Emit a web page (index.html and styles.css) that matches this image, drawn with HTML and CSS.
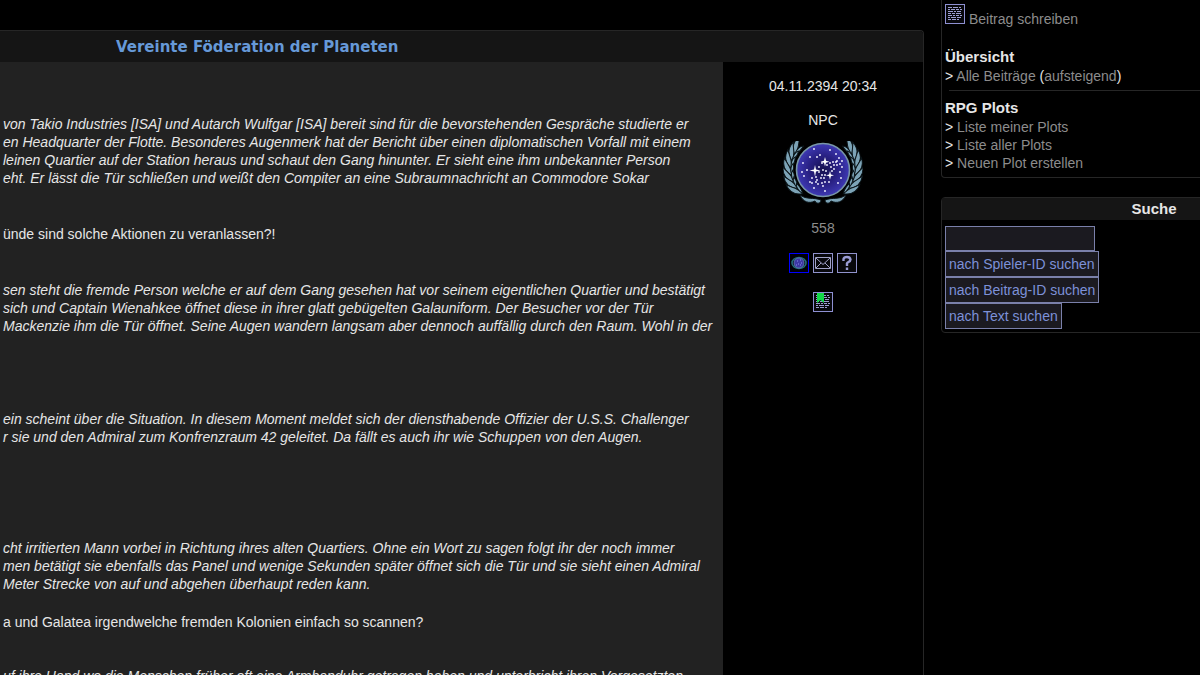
FILE: index.html
```html
<!DOCTYPE html>
<html lang="de">
<head>
<meta charset="utf-8">
<title>Vereinte Föderation der Planeten</title>
<link rel="stylesheet" href="styles.css">
</head>
<body>
<svg class="defs" aria-hidden="true">
  <symbol id="note" viewBox="0 0 20 20">
    <rect x="0.5" y="0.5" width="19" height="19" fill="#08080c" stroke="#8e90d2"/>
    <g stroke="#9c9ed0" fill="none">
      <path d="M3 3.5h14" stroke-dasharray="4 1 5 1 2 1"/>
      <path d="M3 5.5h14" stroke-dasharray="2 1 4 1 3 1"/>
      <path d="M3 7.5h14" stroke-dasharray="5 1 2 1 4 1"/>
      <path d="M3 9.5h14" stroke-dasharray="3 1 3 1 5 1"/>
      <path d="M3 11.5h14" stroke-dasharray="4 1 2 1 3 1"/>
      <path d="M3 13.5h14" stroke-dasharray="2 1 5 1 4 1"/>
      <path d="M3 15.5h11" stroke-dasharray="3 1 4 1 2 1"/>
    </g>
  </symbol>
</svg>
<div class="page">
  <main class="post">
    <header class="post-head"><h1 class="post-title"><a href="#">Vereinte Föderation der Planeten</a></h1></header>
    <div class="post-body">
      <article class="story">
        <p class="gap-m"><em>von Takio Industries [ISA] und Autarch Wulfgar [ISA] bereit sind für die bevorstehenden Gespräche studierte er<br>en Headquarter der Flotte. Besonderes Augenmerk hat der Bericht über einen diplomatischen Vorfall mit einem<br>leinen Quartier auf der Station heraus und schaut den Gang hinunter. Er sieht eine ihm unbekannter Person<br>eht. Er lässt die Tür schließen und weißt den Compiter an eine Subraumnachricht an Commodore Sokar</em></p>
        <p class="gap-m">ünde sind solche Aktionen zu veranlassen?!</p>
        <p class="gap-l"><em>sen steht die fremde Person welche er auf dem Gang gesehen hat vor seinem eigentlichen Quartier und bestätigt<br>sich und Captain Wienahkee öffnet diese in ihrer glatt gebügelten Galauniform. Der Besucher vor der Tür<br>Mackenzie ihm die Tür öffnet. Seine Augen wandern langsam aber dennoch auffällig durch den Raum. Wohl in der</em></p>
        <p class="gap-xl"><em>ein scheint über die Situation. In diesem Moment meldet sich der diensthabende Offizier der U.S.S. Challenger<br>r sie und den Admiral zum Konfrenzraum 42 geleitet. Da fällt es auch ihr wie Schuppen von den Augen.</em></p>
        <p class="gap-s"><em>cht irritierten Mann vorbei in Richtung ihres alten Quartiers. Ohne ein Wort zu sagen folgt ihr der noch immer<br>men betätigt sie ebenfalls das Panel und wenige Sekunden später öffnet sich die Tür und sie sieht einen Admiral<br>Meter Strecke von auf und abgehen überhaupt reden kann.</em></p>
        <p class="gap-n">a und Galatea irgendwelche fremden Kolonien einfach so scannen?</p>
        <p><em>uf ihre Hand wo die Menschen früher oft eine Armbanduhr getragen haben und unterbricht ihren Vorgesetzten</em></p>
      </article>
      <section class="meta">
        <time>04.11.2394 20:34</time>
        <span class="author">NPC</span>
        <svg class="emblem" viewBox="0 0 80 64" role="img" aria-label="Emblem">
          <defs>
            <radialGradient id="sky"><stop offset="0" stop-color="#15104e"/><stop offset="0.55" stop-color="#292184"/><stop offset="1" stop-color="#3e39b4"/></radialGradient>
            <g id="leaves">
              <path d="M9 36C3 33 -1 27 1 19C3 24 9 28 9 36Z"/>
              <path d="M9 36C7 30 8 26 10 24C11 28 11 32 9 36Z"/>
            </g>
            <g id="branch">
              <use href="#leaves" transform="rotate(42 40 28)"/>
              <use href="#leaves" transform="rotate(29 40 28)"/>
              <use href="#leaves" transform="rotate(16 40 28)"/>
              <use href="#leaves" transform="rotate(3 40 28)"/>
              <use href="#leaves" transform="rotate(-10 40 28)"/>
              <use href="#leaves" transform="rotate(-23 40 28)"/>
              <use href="#leaves" transform="rotate(-36 40 28)"/>
              <path d="M17 54C24 59 30 56 38 59C38 63 33 63 32 60C26 63 20 61 17 54Z"/>
            </g>
          </defs>
          <g fill="#7ca3b6" stroke="#0a1418" stroke-width="1">
            <use href="#branch"/>
            <use href="#branch" transform="translate(80 0) scale(-1 1)"/>
          </g>
          <circle cx="40" cy="29" r="26.5" fill="url(#sky)" stroke="#7896a8" stroke-width="1.6"/>
          <path fill="#fff" d="M32 24l1 4.400 4.500 1.100-4.500 1.100-1 5-1-5-4.500-1.100 4.500-1.100zM42 16l1 3.800 3.400 1-3.400 1-1 3.800-1-3.800-3.400-1 3.400-1zM47 30l.9 3.400 3.100.9-3.100.9-.9 3.600-.9-3.600-3.100-.9 3.100-.9z"/>
          <path fill="none" stroke="#f0f0ff" stroke-width="1.9" stroke-linecap="round" d="M31 8h0M47 9h0M27 16h0M34 16h0M53 13h0M37 14h0M20 22h0M19 31h0M21 35h0M24 29h0M29 37h0M33 36h0M27 41h0M33 41h0M35 43h0M31 47h0M42 50h0M39 42h0M42 41h0M46 41h0M40 45h0M38 37h0M41 37h0M39 34h0M36 31h0M40 29h0M43 30h0M49 30h0M48 26h0M51 24h0M47 22h0M44 24h0M50 21h0M54 20h0M57 23h0M54 24h0M59 20h0M56 17h0M51 28h0M59 26h0M57 31h0M58 37h0M55 42h0M36 26h0M39 22h0M34 39h0M29 42h0M53 21h0M42 34h0"/>
        </svg>
        <a class="number" href="#">558</a>
        <div class="actions">
          <a href="#" aria-label="Profil"><svg class="icon" viewBox="0 0 20 20"><rect x="0.5" y="0.5" width="19" height="19" fill="#000008" stroke="#0000ff"/><ellipse cx="10" cy="10" rx="7" ry="5.5" fill="none" stroke="#236b77" stroke-width="1.6"/><ellipse cx="10" cy="10" rx="5" ry="5" fill="#3d38a5" stroke="#5a72b0"/><path d="M8 8h1M11 7h1M12 10h1M9 11h1M11 12h1M7 12h1" stroke="#8b8be8"/></svg></a>
          <a href="#" aria-label="Nachricht"><svg class="icon" viewBox="0 0 20 20"><rect x="0.5" y="0.5" width="19" height="19" fill="#08080c" stroke="#9092cc"/><path d="M2.500 4.500h15v11h-15zM3 5l7 6.500L17 5M3 15l5-5M17 15l-5-5" fill="none" stroke="#a2a3c8"/></svg></a>
          <a href="#" aria-label="Hilfe"><svg class="icon" viewBox="0 0 20 20"><rect x="0.5" y="0.5" width="19" height="19" fill="#08080c" stroke="#9092cc"/><path d="M6.500 8V6Q7 4 10 4T13.500 6.500Q13.500 8 11.500 9T10 11.500V13M10 14.500V17" fill="none" stroke="#999bd4" stroke-width="2.400"/></svg></a>
        </div>
        <a class="bookmark" href="#" aria-label="Lesezeichen"><svg class="icon" viewBox="0 0 20 20"><use href="#note"/><path d="M4 1h7v10L7.500 8 4 11z" fill="#12d848"/></svg></a>
      </section>
    </div>
  </main>
  <aside class="side">
    <nav class="panel menu">
      <p class="write"><svg class="icon" viewBox="0 0 20 20" aria-hidden="true"><use href="#note"/></svg><a href="#">Beitrag schreiben</a></p>
      <h2>Übersicht</h2>
      <p>&gt; <a href="#">Alle Beiträge</a> (<a href="#">aufsteigend</a>)</p>
      <hr>
      <h2>RPG Plots</h2>
      <p>&gt; <a href="#">Liste meiner Plots</a></p>
      <p>&gt; <a href="#">Liste aller Plots</a></p>
      <p>&gt; <a href="#">Neuen Plot erstellen</a></p>
    </nav>
    <section class="panel">
      <h2 class="panel-title">Suche</h2>
      <form class="search">
        <input type="text" aria-label="Suche">
        <button type="button">nach Spieler-ID suchen</button>
        <button type="button">nach Beitrag-ID suchen</button>
        <button type="button">nach Text suchen</button>
      </form>
    </section>
  </aside>
</div>
</body>
</html>
```
FILE: styles.css
```css
* { box-sizing: border-box; }
html { overflow: hidden; background: #000; }
body {
  margin: 0;
  color: #e6e6e6;
  font: 14px/18px "Liberation Sans", Arial, sans-serif;
}
p, h1, h2 { margin: 0; }
a { color: #8c8c8c; text-decoration: none; }
h2 { font-size: 15px; line-height: 20px; }
.defs { position: absolute; width: 0; height: 0; }
.icon { display: block; width: 20px; height: 20px; }

.page { display: flex; gap: 17px; height: 100vh; overflow: hidden; }

.post {
  flex: 1;
  display: flex;
  flex-direction: column;
  min-width: 0;
  margin-top: 30px;
  border: 1px solid #262626;
  border-width: 1px 1px 0 0;
  border-radius: 0 4px 0 0;
}
.post-head { padding: 6px 0 5px 116px; background: #151515; border-radius: 0 3px 0 0; }
.post-title { font: 700 15px/20px "DejaVu Sans", sans-serif; }
.post-title a { color: #6699d8; }
.post-body { flex: 1; display: flex; min-height: 0; }
.story {
  flex: 1;
  min-width: 0;
  padding: 53px 0 0 3px;
  overflow: hidden;
  background: #222;
  white-space: nowrap;
}
.gap-s { margin-bottom: 20px; }
.gap-n { margin-bottom: 36px; }
.gap-m { margin-bottom: 38px; }
.gap-l { margin-bottom: 75px; }
.gap-xl { margin-bottom: 93px; }

.meta {
  flex: 0 0 200px;
  display: flex;
  flex-direction: column;
  align-items: center;
  padding-top: 15px;
}
.author { margin-top: 16px; }
.emblem { width: 80px; height: 64px; margin: 12px 0 14px; }
.actions { display: flex; gap: 4px; margin: 16px 0 19px; }

.side { flex: 0 0 259px; min-width: 0; }
.panel {
  width: 426px;
  border: 1px solid #262626;
  border-radius: 4px;
}
.menu { border-top: 0; border-radius: 0 0 4px 4px; padding: 4px 3px 5px; margin-bottom: 19px; }
.menu hr { height: 1px; margin: 5px 0 7px 4px; border: 0; background: #262626; }
.write { display: flex; gap: 4px; margin-bottom: 19px; }
.write a { padding-top: 6px; }
.panel-title { padding: 1px 0; background: #151515; text-align: center; }
.search { display: flex; flex-direction: column; align-items: flex-start; padding: 6px 3px 3px; }
.search input, .search button {
  height: 26px;
  padding: 0 3px;
  border: 1px solid #7a80aa;
  border-radius: 0;
  background: #1b1a20;
  color: #7d91d8;
  font: inherit;
}
.search input { width: 150px; height: 25px; }
```
